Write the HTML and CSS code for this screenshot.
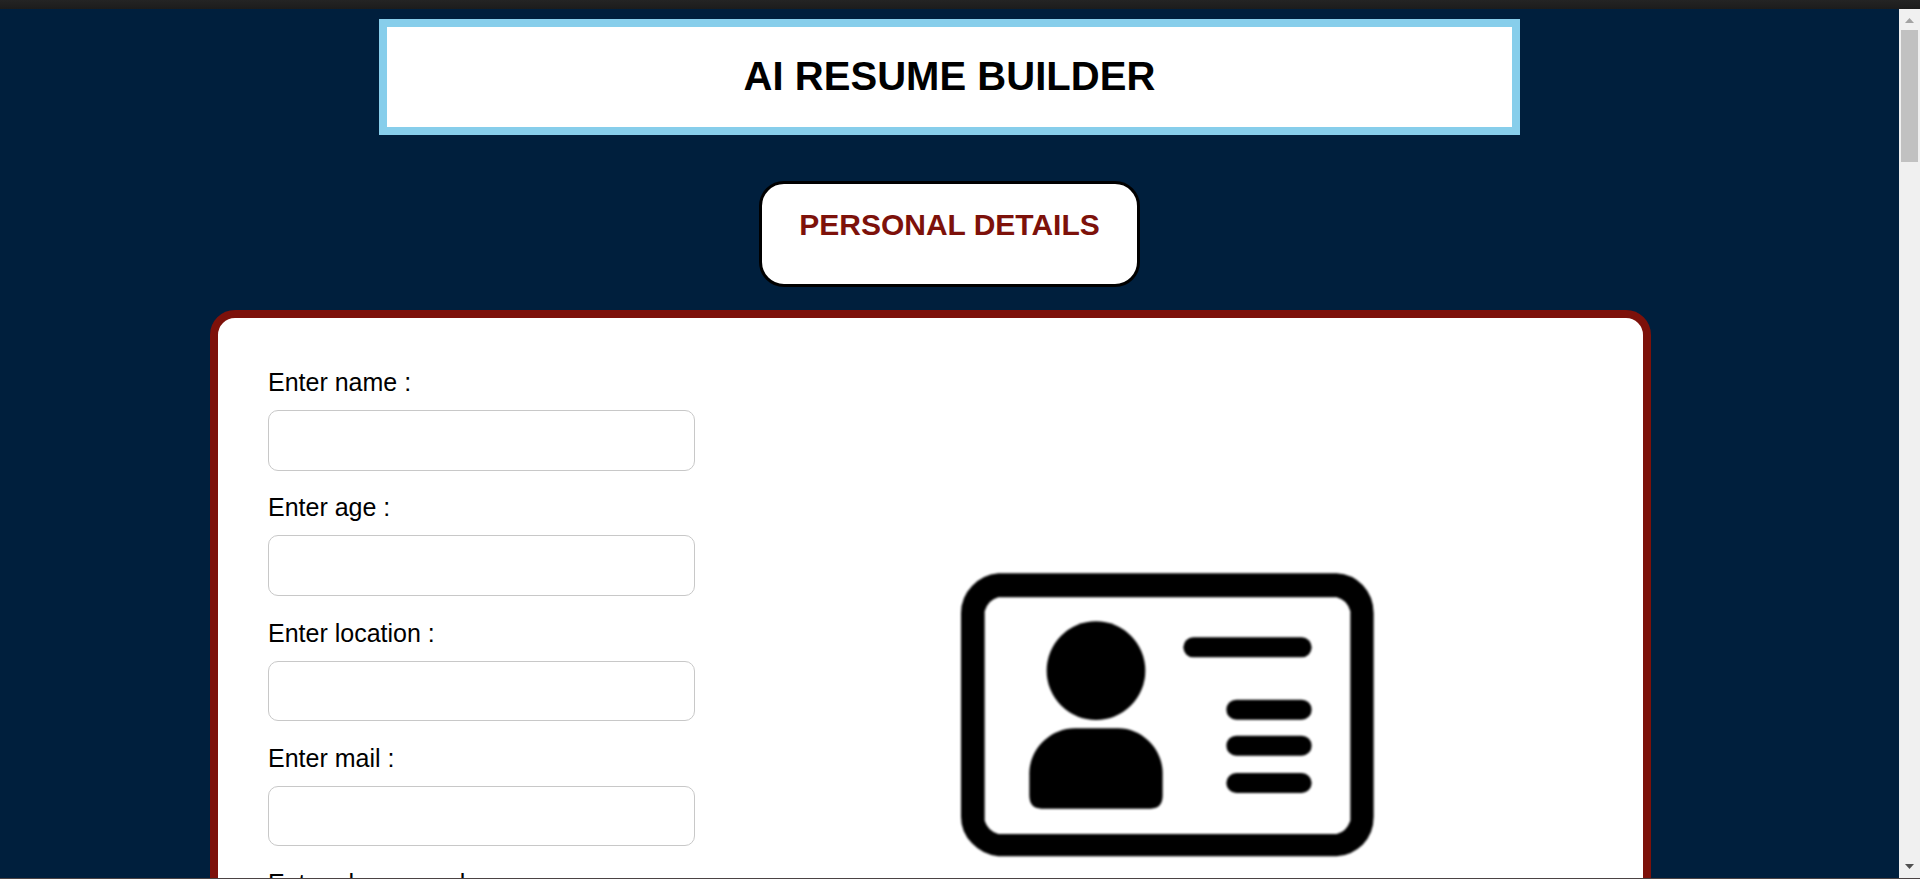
FILE: index.html
```html
<!DOCTYPE html>
<html lang="en">
<head>
<meta charset="utf-8">
<title>AI Resume Builder</title>
<link rel="stylesheet" href="styles.css">
</head>
<body>
<div class="window">
  <div class="chrome"></div>
  <div class="view">
    <main class="page">
      <header class="banner"><h1 class="banner-title">AI RESUME BUILDER</h1></header>
      <div class="section-tag"><h2 class="section-title">PERSONAL DETAILS</h2></div>
      <section class="card">
        <form class="fields">
          <div class="field"><label class="label" for="name">Enter name :</label><input class="input" id="name" type="text"></div>
          <div class="field"><label class="label" for="age">Enter age :</label><input class="input" id="age" type="text"></div>
          <div class="field"><label class="label" for="location">Enter location :</label><input class="input" id="location" type="text"></div>
          <div class="field"><label class="label" for="mail">Enter mail :</label><input class="input" id="mail" type="text"></div>
          <div class="field"><label class="label" for="phone">Enter phone number :</label><input class="input" id="phone" type="text"></div>
        </form>
        <svg class="id-icon" viewBox="0 0 1380 987" width="460" height="329" aria-hidden="true">
          <path fill-rule="evenodd" d="M175 70H1190Q1235 72 1268 105Q1301 140 1301 190V800Q1301 850 1268 884Q1235 916 1190 919H175Q128 914 96 880Q63 846 63 800V190Q63 142 96 108Q128 74 175 70ZM175 142Q144 150 134 184V812Q144 843 175 852H1190Q1219 845 1231 812V184Q1222 150 1190 142Z"/>
          <circle cx="468" cy="362" r="148"/>
          <path d="M405 535H535C607 535 668 598 668 670V736Q668 776 632 776H304Q268 776 268 736V670C268 598 330 535 405 535Z"/>
          <rect x="730" y="262" width="385" height="60" rx="30"/>
          <rect x="859" y="449" width="256" height="60" rx="30"/>
          <rect x="859" y="557" width="256" height="60" rx="30"/>
          <rect x="859" y="669" width="256" height="60" rx="30"/>
        </svg>
      </section>
    </main>
    <aside class="scrollbar">
      <svg class="arrow" width="21" height="21" viewBox="0 0 21 21"><path fill="#a3a3a3" d="M10.5 9L15 14H6Z"/></svg>
      <div class="thumb"></div>
      <svg class="arrow" width="21" height="21" viewBox="0 0 21 21"><path fill="#505050" d="M6 7H15L10.5 12Z"/></svg>
    </aside>
  </div>
  <div class="edge"></div>
</div>
</body>
</html>
```
FILE: styles.css
```css
* { box-sizing: border-box; }
body { margin: 0; overflow: hidden; font-family: "Liberation Sans", Arial, sans-serif; color: #000; }
.window { display: flex; flex-direction: column; height: 879px; overflow: hidden; }
.chrome { flex: none; height: 9px; background: linear-gradient(#242424, #1c1c1c); }
.view { display: flex; flex: 1; min-height: 0; background: #001f3d; }
.page { flex: 1; overflow: hidden; padding-top: 10px; }
.edge { flex: none; height: 1px; background: #4b4344; }
.banner { width: 1141px; height: 116px; margin: 0 auto; border: 8px solid #87ceeb; background: #fff; text-align: center; }
.banner-title { margin: 26px 0 0; font-size: 40px; line-height: 46px; letter-spacing: 0.04px; }
.section-tag { width: 381px; height: 106px; margin: 46px auto 0; border: 3px solid #000; border-radius: 25px; background: #fff; text-align: center; }
.section-title { margin: 24px 0 0; font-size: 30px; line-height: 34px; color: #7d110a; }
.card { display: flex; align-items: flex-start; width: 1441px; height: 1000px; margin: 23px 0 0 210px; padding: 47px 50px; border: 8px solid #7d110a; border-radius: 25px; background: #fff; }
.fields { display: flex; flex-direction: column; width: 427px; }
.field { display: flex; flex-direction: column; height: 125.3px; }
.label { height: 45px; padding-top: 3px; font-size: 25px; line-height: 29px; }
.input { width: 427px; height: 60.5px; border: 1px solid #c8c8c8; border-radius: 10px; background: #fff; }
.id-icon { margin: 185px 0 0 245px; filter: blur(1.1px); }
.scrollbar { display: flex; flex: none; flex-direction: column; align-items: center; width: 21px; background: #f0f0f0; }
.arrow { display: block; flex: none; }
.thumb { width: 17px; height: 132px; margin-bottom: auto; background: #c1c1c1; }
```
